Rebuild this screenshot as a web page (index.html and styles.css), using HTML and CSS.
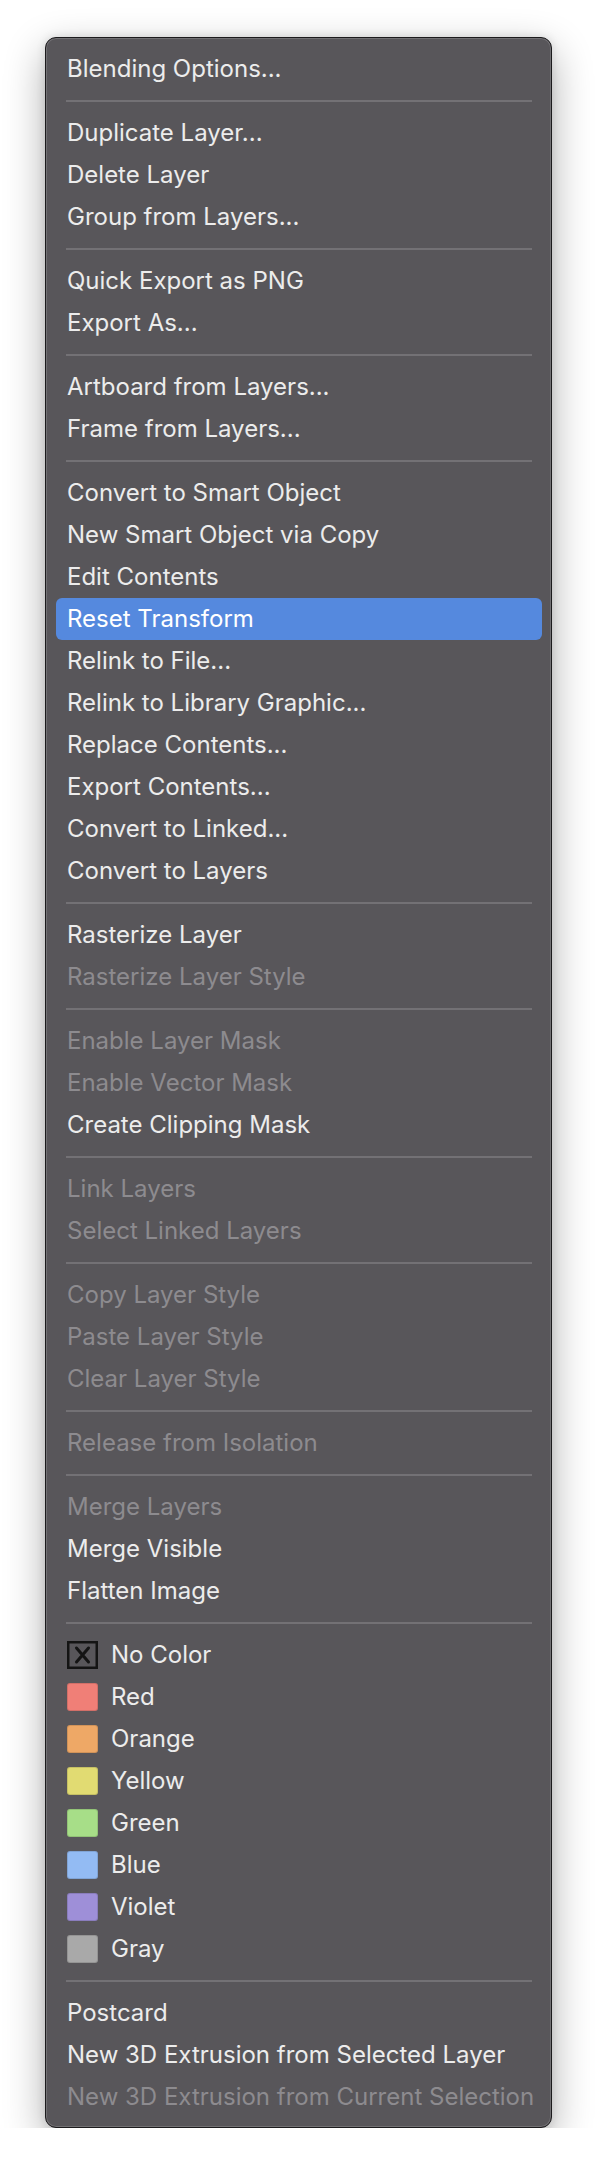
FILE: index.html
```html
<!DOCTYPE html>
<html>
<head>
<meta charset="utf-8">
<link rel="stylesheet" href="styles.css">
</head>
<body>
<div class="page">
  <div class="menu">
    <div class="item">Blending Options...</div>
    <div class="sep"></div>
    <div class="item">Duplicate Layer...</div>
    <div class="item">Delete Layer</div>
    <div class="item">Group from Layers...</div>
    <div class="sep"></div>
    <div class="item">Quick Export as PNG</div>
    <div class="item">Export As...</div>
    <div class="sep"></div>
    <div class="item">Artboard from Layers...</div>
    <div class="item">Frame from Layers...</div>
    <div class="sep"></div>
    <div class="item">Convert to Smart Object</div>
    <div class="item">New Smart Object via Copy</div>
    <div class="item">Edit Contents</div>
    <div class="item active">Reset Transform</div>
    <div class="item">Relink to File...</div>
    <div class="item">Relink to Library Graphic...</div>
    <div class="item">Replace Contents...</div>
    <div class="item">Export Contents...</div>
    <div class="item">Convert to Linked...</div>
    <div class="item">Convert to Layers</div>
    <div class="sep"></div>
    <div class="item">Rasterize Layer</div>
    <div class="item disabled">Rasterize Layer Style</div>
    <div class="sep"></div>
    <div class="item disabled">Enable Layer Mask</div>
    <div class="item disabled">Enable Vector Mask</div>
    <div class="item">Create Clipping Mask</div>
    <div class="sep"></div>
    <div class="item disabled">Link Layers</div>
    <div class="item disabled">Select Linked Layers</div>
    <div class="sep"></div>
    <div class="item disabled">Copy Layer Style</div>
    <div class="item disabled">Paste Layer Style</div>
    <div class="item disabled">Clear Layer Style</div>
    <div class="sep"></div>
    <div class="item disabled">Release from Isolation</div>
    <div class="sep"></div>
    <div class="item disabled">Merge Layers</div>
    <div class="item">Merge Visible</div>
    <div class="item">Flatten Image</div>
    <div class="sep"></div>
    <div class="item color">
      <svg class="swatch none" width="31" height="28" viewBox="0 0 31 28">
        <rect x="1.25" y="1.25" width="28.5" height="25.5" fill="none" stroke="#141414" stroke-width="2.5"/>
        <path d="M9.5 7 L21.5 21 M21.5 7 L9.5 21" stroke="#141414" stroke-width="3" stroke-linecap="round"/>
      </svg>
      <span>No Color</span>
    </div>
    <div class="item color"><span class="swatch red"></span><span>Red</span></div>
    <div class="item color"><span class="swatch orange"></span><span>Orange</span></div>
    <div class="item color"><span class="swatch yellow"></span><span>Yellow</span></div>
    <div class="item color"><span class="swatch green"></span><span>Green</span></div>
    <div class="item color"><span class="swatch blue"></span><span>Blue</span></div>
    <div class="item color"><span class="swatch violet"></span><span>Violet</span></div>
    <div class="item color"><span class="swatch gray"></span><span>Gray</span></div>
    <div class="sep"></div>
    <div class="item">Postcard</div>
    <div class="item">New 3D Extrusion from Selected Layer</div>
    <div class="item disabled">New 3D Extrusion from Current Selection</div>
  </div>
</div>
</body>
</html>
```
FILE: styles.css
```css
html, body {
  margin: 0;
  background: #ffffff;
}
body {
  font-family: Inter, "Noto Sans", "Liberation Sans", sans-serif;
}
.page {
  padding: 37px 0 0 45px;
}
.menu {
  box-sizing: border-box;
  width: 507px;
  padding: 10px 9px 9px 10px;
  background: #58565a;
  border: 1px solid #1c1b1d;
  border-radius: 11px;
  box-shadow: inset 0 0 0 1px rgba(255, 255, 255, 0.16),
              0 14px 40px rgba(0, 0, 0, 0.32),
              0 0 10px rgba(0, 0, 0, 0.12);
}
.item {
  height: 42px;
  line-height: 42px;
  padding-left: 11px;
  font-size: 24px;
  color: #ececec;
  border-radius: 6px;
  white-space: nowrap;
}
.item.active {
  background: #5589de;
  color: #ffffff;
}
.item.disabled {
  color: #8d8b8f;
}
.sep {
  height: 2px;
  margin: 10px 10px;
  background: #737175;
}
.color {
  display: flex;
  align-items: center;
  gap: 13px;
}
.swatch {
  display: block;
  flex: none;
  width: 31px;
  height: 28px;
  box-sizing: border-box;
  border-radius: 3px;
  border: 1px solid rgba(0, 0, 0, 0.12);
}
.swatch.none {
  border: none;
  border-radius: 0;
}
.red { background: #f07f77; }
.orange { background: #eea866; }
.yellow { background: #e1db72; }
.green { background: #a7de88; }
.blue { background: #93bbf3; }
.violet { background: #9e8fd8; }
.gray { background: #a9a9a9; }
```
